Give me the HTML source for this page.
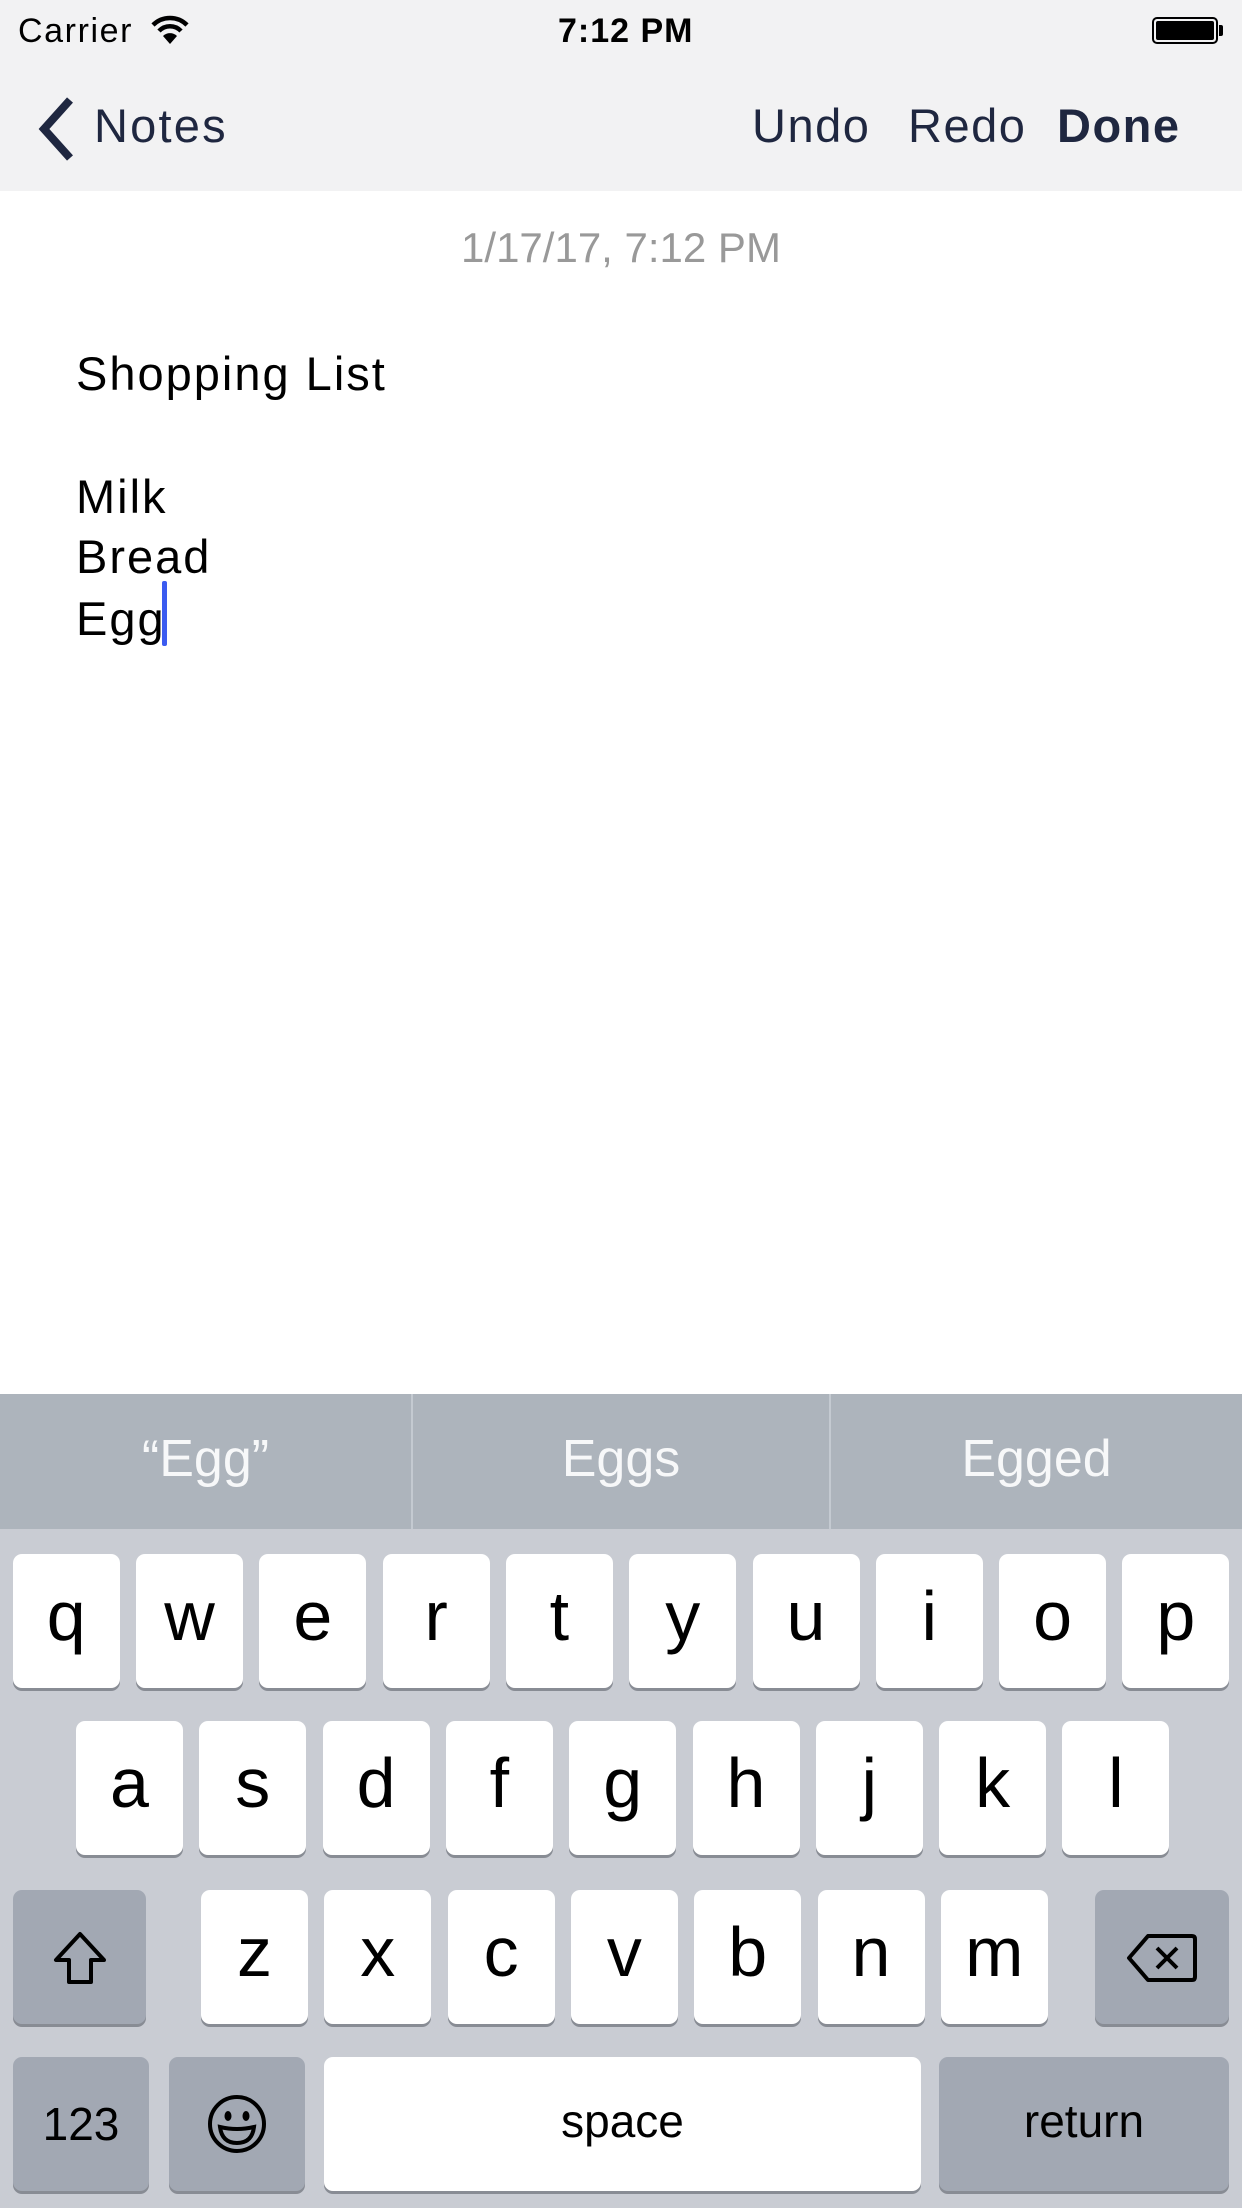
<!DOCTYPE html>
<html><head><meta charset="utf-8"><style>
*{margin:0;padding:0;box-sizing:border-box}
body{width:1242px;height:2208px;position:relative;background:#fff;font-family:"Liberation Sans",sans-serif;overflow:hidden}
.a{position:absolute;white-space:nowrap}
.nav{position:absolute;left:0;top:0;width:1242px;height:191px;background:#f2f2f3}
.navt{color:#1f2740;font-size:47px;top:98px;letter-spacing:1.5px}
.txt{font-size:47px;color:#000;left:76px;letter-spacing:2px}
.kb{position:absolute;left:0;top:1394px;width:1242px;height:814px;background:#c9ccd3}
.sug{position:absolute;left:0;top:1394px;width:1242px;height:135px;background:#adb4bc}
.sg{position:absolute;top:1394px;height:135px;line-height:130px;text-align:center;color:#f7f8f9;font-size:52px}
.k{position:absolute;width:107px;height:134px;background:#fff;border-radius:9px;box-shadow:0 3px 0 #888c94;text-align:center;font-size:70px;line-height:124px;color:#000}
.s{background:#a2a8b3}
</style></head><body>
<div class="nav"></div>
<div class="a" style="left:18px;top:12px;font-size:34px;color:#000;letter-spacing:1.6px">Carrier</div>
<svg class="a" style="left:150px;top:14px" width="40" height="32" viewBox="0 0 40 32"><path d="M3 11 A24 24 0 0 1 37 11" stroke="#000" stroke-width="4.5" fill="none"/><path d="M9 17 A15 15 0 0 1 31 17" stroke="#000" stroke-width="4.5" fill="none"/><path d="M20 30 L13 22 A10 10 0 0 1 27 22 Z" fill="#000"/></svg>
<div class="a" style="left:558px;top:12px;font-size:34px;font-weight:bold;color:#000;letter-spacing:1px">7:12 PM</div>
<div class="a" style="left:1152px;top:17px;width:66px;height:27px;border:2px solid #000;border-radius:5px;padding:2px"><div style="width:100%;height:100%;background:#000;border-radius:2px"></div></div>
<div class="a" style="left:1219px;top:25px;width:4px;height:11px;background:#000;border-radius:0 2px 2px 0"></div>
<svg class="a" style="left:34px;top:96px" width="46" height="66" viewBox="0 0 46 66"><path d="M36 4 L10 33 L36 62" stroke="#1f2740" stroke-width="8" fill="none"/></svg>
<div class="a navt" style="left:94px;letter-spacing:2.2px">Notes</div>
<div class="a navt" style="left:752px">Undo</div>
<div class="a navt" style="left:908px">Redo</div>
<div class="a navt" style="left:1057px;font-weight:bold">Done</div>
<div class="a" style="left:0;width:1242px;text-align:center;top:224px;font-size:42px;color:#999">1/17/17, 7:12 PM</div>
<div class="a txt" style="top:346px">Shopping List</div>
<div class="a txt" style="top:469px">Milk</div>
<div class="a txt" style="top:529px">Bread</div>
<div class="a txt" style="top:591px">Egg</div>
<div class="a" style="left:162px;top:581px;width:5px;height:65px;background:#3b5bf0;border-radius:2px"></div>
<div class="kb"></div>
<div class="sug"></div>
<div class="a" style="left:411px;top:1394px;width:2px;height:135px;background:#c4cad1"></div>
<div class="a" style="left:829px;top:1394px;width:2px;height:135px;background:#c4cad1"></div>
<div class="sg" style="left:0;width:411px">“Egg”</div>
<div class="sg" style="left:413px;width:416px">Eggs</div>
<div class="sg" style="left:831px;width:411px">Egged</div>
<div id="keys"></div>
<div class="k s" style="left:13px;top:2057px;width:136px;font-size:46px;line-height:134px">123</div>
<div class="k s" style="left:169px;top:2057px;width:136px"><svg width="70" height="70" viewBox="0 0 70 70" style="margin-top:32px"><circle cx="35" cy="35" r="27" stroke="#000" stroke-width="4" fill="none"/><ellipse cx="26" cy="27" rx="3.5" ry="5"/><ellipse cx="44" cy="27" rx="3.5" ry="5"/><path d="M18 38 Q35 42 52 38 Q50 54 35 54 Q20 54 18 38 Z" stroke="#000" stroke-width="4" fill="none"/></svg></div>
<div class="k" style="left:324px;top:2057px;width:597px;font-size:46px;line-height:128px">space</div>
<div class="k s" style="left:939px;top:2057px;width:290px;font-size:46px;line-height:128px">return</div>
<div class="k s" style="left:13px;top:1890px;width:133px"><svg width="60" height="60" viewBox="0 0 60 60" style="margin-top:38px"><path d="M30 6 L6 32 L19 32 L19 54 L41 54 L41 32 L54 32 Z" stroke="#000" stroke-width="4" fill="none" stroke-linejoin="round"/></svg></div>
<div class="k s" style="left:1095px;top:1890px;width:134px"><svg width="72" height="52" viewBox="0 0 72 52" style="margin-top:42px"><path d="M22 4 L66 4 Q69 4 69 7 L69 45 Q69 48 66 48 L22 48 L3 26 Z" stroke="#000" stroke-width="4" fill="none" stroke-linejoin="round"/><path d="M31 16 L51 36 M51 16 L31 36" stroke="#000" stroke-width="4"/></svg></div>
<script>
var h='';
function row(s,x0,y){for(var i=0;i<s.length;i++){h+='<div class="k" style="left:'+(x0+i*123.3)+'px;top:'+y+'px">'+s[i]+'</div>';}}
row('qwertyuiop',12.7,1554);row('asdfghjkl',76,1721);row('zxcvbnm',201,1890);
document.getElementById('keys').innerHTML=h;
</script>
</body></html>
